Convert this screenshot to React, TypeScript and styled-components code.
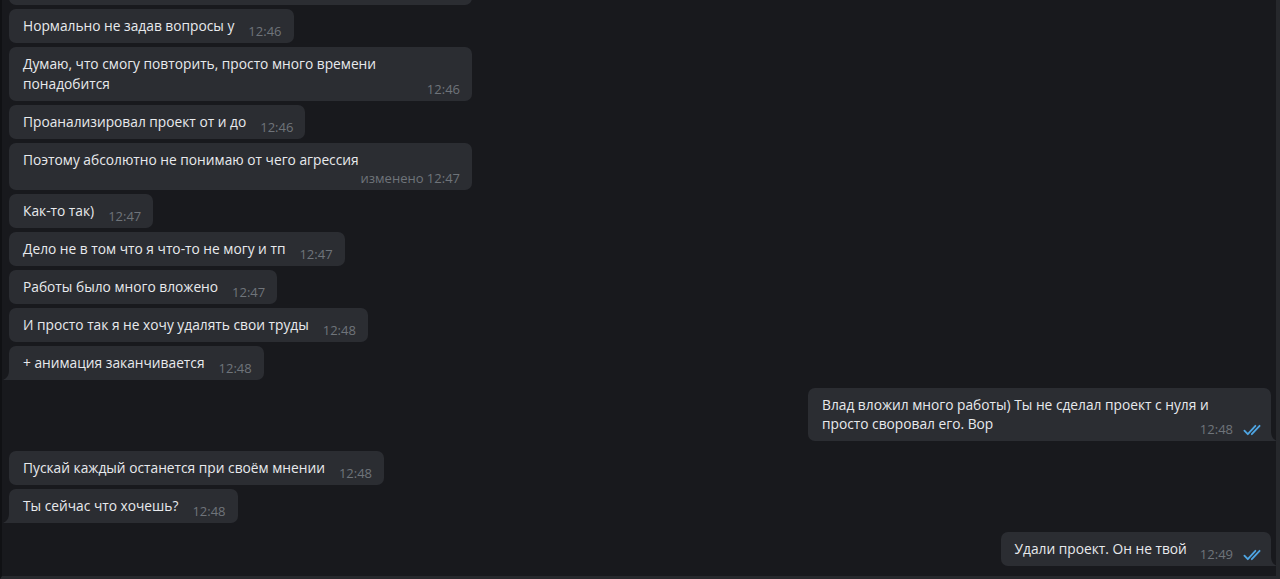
import React from "react";
import styled, { createGlobalStyle } from "styled-components";

const Global = createGlobalStyle`
  html, body { margin: 0; padding: 0; background: #18191d; }
  #root { height: 579px; }
`;

const Screen = styled.div`
  box-sizing: border-box;
  height: 579px;
  overflow: hidden;
  background: #18191d;
  border-left: 2px solid #101114;
  border-right: 4px solid #26282c;
  border-bottom: 3px solid #27292d;
  padding: 0 5px 0 7px;
  font-family: "Open Sans", "Noto Sans", sans-serif;
`;

const Messages = styled.div`
  display: flex;
  flex-direction: column;
  gap: 8px;
  margin-top: -29px;
`;

const Group = styled.div<{ $out?: boolean; $top?: number }>`
  display: flex;
  flex-direction: column;
  gap: 4px;
  align-items: ${(p) => (p.$out ? "flex-end" : "flex-start")};
  margin-top: ${(p) => p.$top ?? 0}px;
`;

const Bubble = styled.div<{
  $out?: boolean;
  $tail?: boolean;
  $wide?: boolean;
  $ownLine?: boolean;
}>`
  position: relative;
  box-sizing: border-box;
  max-width: 463px;
  width: ${(p) => (p.$wide ? "463px" : "auto")};
  background: #2b2d32;
  border-radius: 7px;
  ${(p) =>
    p.$tail
      ? p.$out
        ? "border-bottom-right-radius: 0;"
        : "border-bottom-left-radius: 0;"
      : ""}
  padding: 7px ${(p) => (p.$out ? 9 : 12)}px ${(p) => (p.$ownLine ? 1 : 7.5)}px 14px;
  color: #e8eaed;
  font-size: 13.75px;
  line-height: 19.5px;
`;

const PartialBubble = styled(Bubble)`
  height: 34px;
`;

const Text = styled.div`
  max-width: 430px;
`;

const Spacer = styled.span<{ $out?: boolean }>`
  display: inline-block;
  visibility: hidden;
  height: 1px;
  overflow: hidden;
  vertical-align: baseline;
  white-space: nowrap;
  margin-left: ${(p) => (p.$out ? 13 : 14)}px;
`;

const Meta = styled.div<{ $out?: boolean }>`
  position: absolute;
  right: ${(p) => (p.$out ? 9 : 12)}px;
  bottom: 2px;
  display: flex;
  align-items: center;
  gap: 10px;
  white-space: nowrap;
`;

const MetaInline = styled.span`
  display: inline-flex;
  align-items: center;
  gap: 10px;
`;

const Time = styled.span`
  font-size: 13px;
  line-height: 20px;
  color: #6f747a;
`;

const TailSvg = styled.svg<{ $out?: boolean }>`
  position: absolute;
  bottom: 0;
  ${(p) => (p.$out ? "right: -6px; transform: scaleX(-1);" : "left: -6px;")}
  width: 6px;
  height: 10px;
  display: block;
`;

const CheckSvg = styled.svg`
  width: 19px;
  height: 12px;
  display: block;
  margin-top: 1px;
`;

function Checks() {
  return (
    <CheckSvg viewBox="0 0 19 12" fill="none" stroke="#4ea5e3" strokeWidth={1.8} strokeLinecap="round" strokeLinejoin="round">
      <path d="M1.4 6.6 L4.8 10.2 L12.4 1.8" />
      <path d="M8.8 10.2 L16.6 1.8" />
    </CheckSvg>
  );
}

function Tail({ out }: { out?: boolean }) {
  return (
    <TailSvg $out={out} viewBox="0 0 6 10" aria-hidden>
      <path d="M6 0 C6 5 4 8.4 0.6 9.6 C0.2 9.75 0.2 10 0.8 10 H6 Z" fill="#2b2d32" />
    </TailSvg>
  );
}

type Msg = {
  text: string;
  time: string;
  out?: boolean;
  tail?: boolean;
  wide?: boolean;
  ownLine?: boolean;
};

function Message({ text, time, out, tail, wide, ownLine }: Msg) {
  const meta = (
    <>
      <Time>{time}</Time>
      {out && <Checks />}
    </>
  );
  return (
    <Bubble $out={out} $tail={tail} $wide={wide} $ownLine={ownLine}>
      <Text>
        {text}
        <Spacer $out={out}>
          <MetaInline>{meta}</MetaInline>
        </Spacer>
      </Text>
      <Meta $out={out}>{meta}</Meta>
      {tail && <Tail out={out} />}
    </Bubble>
  );
}

const groups: { out?: boolean; top?: number; partial?: boolean; items: Msg[] }[] = [
  {
    partial: true,
    items: [
      { text: "Нормально не задав вопросы у", time: "12:46" },
      { text: "Думаю, что смогу повторить, просто много времени понадобится", time: "12:46", wide: true },
      { text: "Проанализировал проект от и до", time: "12:46" },
      { text: "Поэтому абсолютно не понимаю от чего агрессия", time: "изменено 12:47", wide: true, ownLine: true },
      { text: "Как-то так)", time: "12:47" },
      { text: "Дело не в том что я что-то не могу и тп", time: "12:47" },
      { text: "Работы было много вложено", time: "12:47" },
      { text: "И просто так я не хочу удалять свои труды", time: "12:48" },
      { text: "+ анимация заканчивается", time: "12:48", tail: true },
    ],
  },
  {
    out: true,
    items: [
      {
        text: "Влад вложил много работы) Ты не сделал проект с нуля и просто своровал его. Вор",
        time: "12:48",
        out: true,
        tail: true,
        wide: true,
      },
    ],
  },
  {
    top: 1.5,
    items: [
      { text: "Пускай каждый останется при своём мнении", time: "12:48" },
      { text: "Ты сейчас что хочешь?", time: "12:48", tail: true },
    ],
  },
  {
    out: true,
    top: 1.5,
    items: [{ text: "Удали проект. Он не твой", time: "12:49", out: true, tail: true }],
  },
];

export default function App() {
  return (
    <>
      <Global />
      <Screen>
        <Messages>
          {groups.map((g, gi) => (
            <Group key={gi} $out={g.out} $top={g.top}>
              {g.partial && <PartialBubble $wide />}
              {g.items.map((m, i) => (
                <Message key={i} {...m} />
              ))}
            </Group>
          ))}
        </Messages>
      </Screen>
    </>
  );
}
